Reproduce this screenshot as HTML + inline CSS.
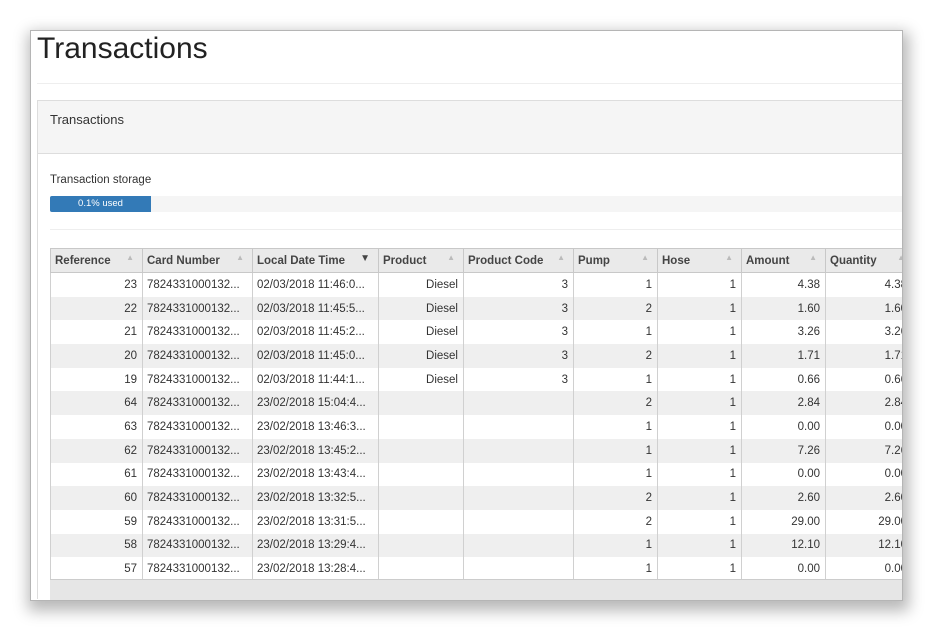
<!DOCTYPE html>
<html><head><style>
body{margin:0;width:931px;height:630px;background:#fff;position:relative;overflow:hidden;font-family:"Liberation Sans",Arial,sans-serif;}
.win{position:absolute;left:30px;top:30px;width:871px;height:569px;background:#fff;border:1px solid #b5b5b5;box-shadow:2px 6px 14px 4px rgba(0,0,0,.28);overflow:hidden}
.abs{position:absolute}
h1{position:absolute;left:6px;top:1px;margin:0;font-weight:normal;font-size:30px;color:#222}
table{border-collapse:collapse;font-size:11.5px;color:#333;table-layout:fixed}
th{background:#eaeaea;border:1px solid #c8c8c8;text-align:left;font-weight:bold;height:23px;padding:0 4px;position:relative;color:#444}
th span{position:absolute;right:8px;top:4px;color:#bbb;font-size:8px}
td{border-left:1px solid #d0d0d0;border-right:1px solid #d0d0d0;height:23.7px;padding:0 5px;text-align:right;white-space:nowrap;overflow:hidden}
td.l{text-align:left;padding-left:4px}
td.q{padding-right:18px;overflow:visible}
tr:nth-child(odd) td{background:#efefef}
</style></head><body>
<div class="win">
<h1>Transactions</h1>
<div class="abs" style="left:6px;top:52px;width:870px;border-top:1px solid #eee"></div>
<div class="abs" style="left:6px;top:69px;width:870px;height:498px;border:1px solid #ddd;border-right:none;border-bottom:none"></div>
<div class="abs" style="left:7px;top:70px;width:870px;height:52px;background:#f5f5f5;border-bottom:1px solid #ddd"></div>
<div class="abs" style="left:19px;top:81px;font-size:13px;color:#333">Transactions</div>
<div class="abs" style="left:19px;top:143px;font-size:11.5px;color:#333">Transaction storage</div>
<div class="abs" style="left:19px;top:165px;width:860px;height:16px;background:#f5f5f5"></div>
<div class="abs" style="left:19px;top:165px;width:101px;height:16px;background:#337ab7;border-radius:2px 0 0 2px;color:#fff;font-size:9.5px;text-align:center;line-height:16px">0.1% used</div>
<div class="abs" style="left:19px;top:198px;width:860px;border-top:1px solid #eee"></div>
<div class="abs" style="left:19px;top:217px;width:900px">
<table style="width:875px">
<colgroup><col style="width:92px"><col style="width:110px"><col style="width:126px"><col style="width:85px"><col style="width:110px"><col style="width:84px"><col style="width:84px"><col style="width:84px"><col style="width:100px"></colgroup>
<tr><th>Reference<span>▲</span></th><th>Card Number<span>▲</span></th><th>Local Date Time<span style="color:#444;font-size:10px">▼</span></th><th>Product<span>▲</span></th><th>Product Code<span>▲</span></th><th>Pump<span>▲</span></th><th>Hose<span>▲</span></th><th>Amount<span>▲</span></th><th>Quantity<span style="right:20px">▲</span></th></tr>
<tr><td>23</td><td class="l">7824331000132...</td><td class="l">02/03/2018 11:46:0...</td><td>Diesel</td><td>3</td><td>1</td><td>1</td><td>4.38</td><td class="q">4.38</td></tr>
<tr><td>22</td><td class="l">7824331000132...</td><td class="l">02/03/2018 11:45:5...</td><td>Diesel</td><td>3</td><td>2</td><td>1</td><td>1.60</td><td class="q">1.60</td></tr>
<tr><td>21</td><td class="l">7824331000132...</td><td class="l">02/03/2018 11:45:2...</td><td>Diesel</td><td>3</td><td>1</td><td>1</td><td>3.26</td><td class="q">3.26</td></tr>
<tr><td>20</td><td class="l">7824331000132...</td><td class="l">02/03/2018 11:45:0...</td><td>Diesel</td><td>3</td><td>2</td><td>1</td><td>1.71</td><td class="q">1.71</td></tr>
<tr><td>19</td><td class="l">7824331000132...</td><td class="l">02/03/2018 11:44:1...</td><td>Diesel</td><td>3</td><td>1</td><td>1</td><td>0.66</td><td class="q">0.66</td></tr>
<tr><td>64</td><td class="l">7824331000132...</td><td class="l">23/02/2018 15:04:4...</td><td></td><td></td><td>2</td><td>1</td><td>2.84</td><td class="q">2.84</td></tr>
<tr><td>63</td><td class="l">7824331000132...</td><td class="l">23/02/2018 13:46:3...</td><td></td><td></td><td>1</td><td>1</td><td>0.00</td><td class="q">0.00</td></tr>
<tr><td>62</td><td class="l">7824331000132...</td><td class="l">23/02/2018 13:45:2...</td><td></td><td></td><td>1</td><td>1</td><td>7.26</td><td class="q">7.26</td></tr>
<tr><td>61</td><td class="l">7824331000132...</td><td class="l">23/02/2018 13:43:4...</td><td></td><td></td><td>1</td><td>1</td><td>0.00</td><td class="q">0.00</td></tr>
<tr><td>60</td><td class="l">7824331000132...</td><td class="l">23/02/2018 13:32:5...</td><td></td><td></td><td>2</td><td>1</td><td>2.60</td><td class="q">2.60</td></tr>
<tr><td>59</td><td class="l">7824331000132...</td><td class="l">23/02/2018 13:31:5...</td><td></td><td></td><td>2</td><td>1</td><td>29.00</td><td class="q">29.00</td></tr>
<tr><td>58</td><td class="l">7824331000132...</td><td class="l">23/02/2018 13:29:4...</td><td></td><td></td><td>1</td><td>1</td><td>12.10</td><td class="q">12.10</td></tr>
<tr><td>57</td><td class="l">7824331000132...</td><td class="l">23/02/2018 13:28:4...</td><td></td><td></td><td>1</td><td>1</td><td>0.00</td><td class="q">0.00</td></tr>
</table>
</div>
<div class="abs" style="left:19px;top:548px;width:860px;height:21px;background:#e6e6e6;border-top:1px solid #ccc"></div>
</div>
</body></html>
